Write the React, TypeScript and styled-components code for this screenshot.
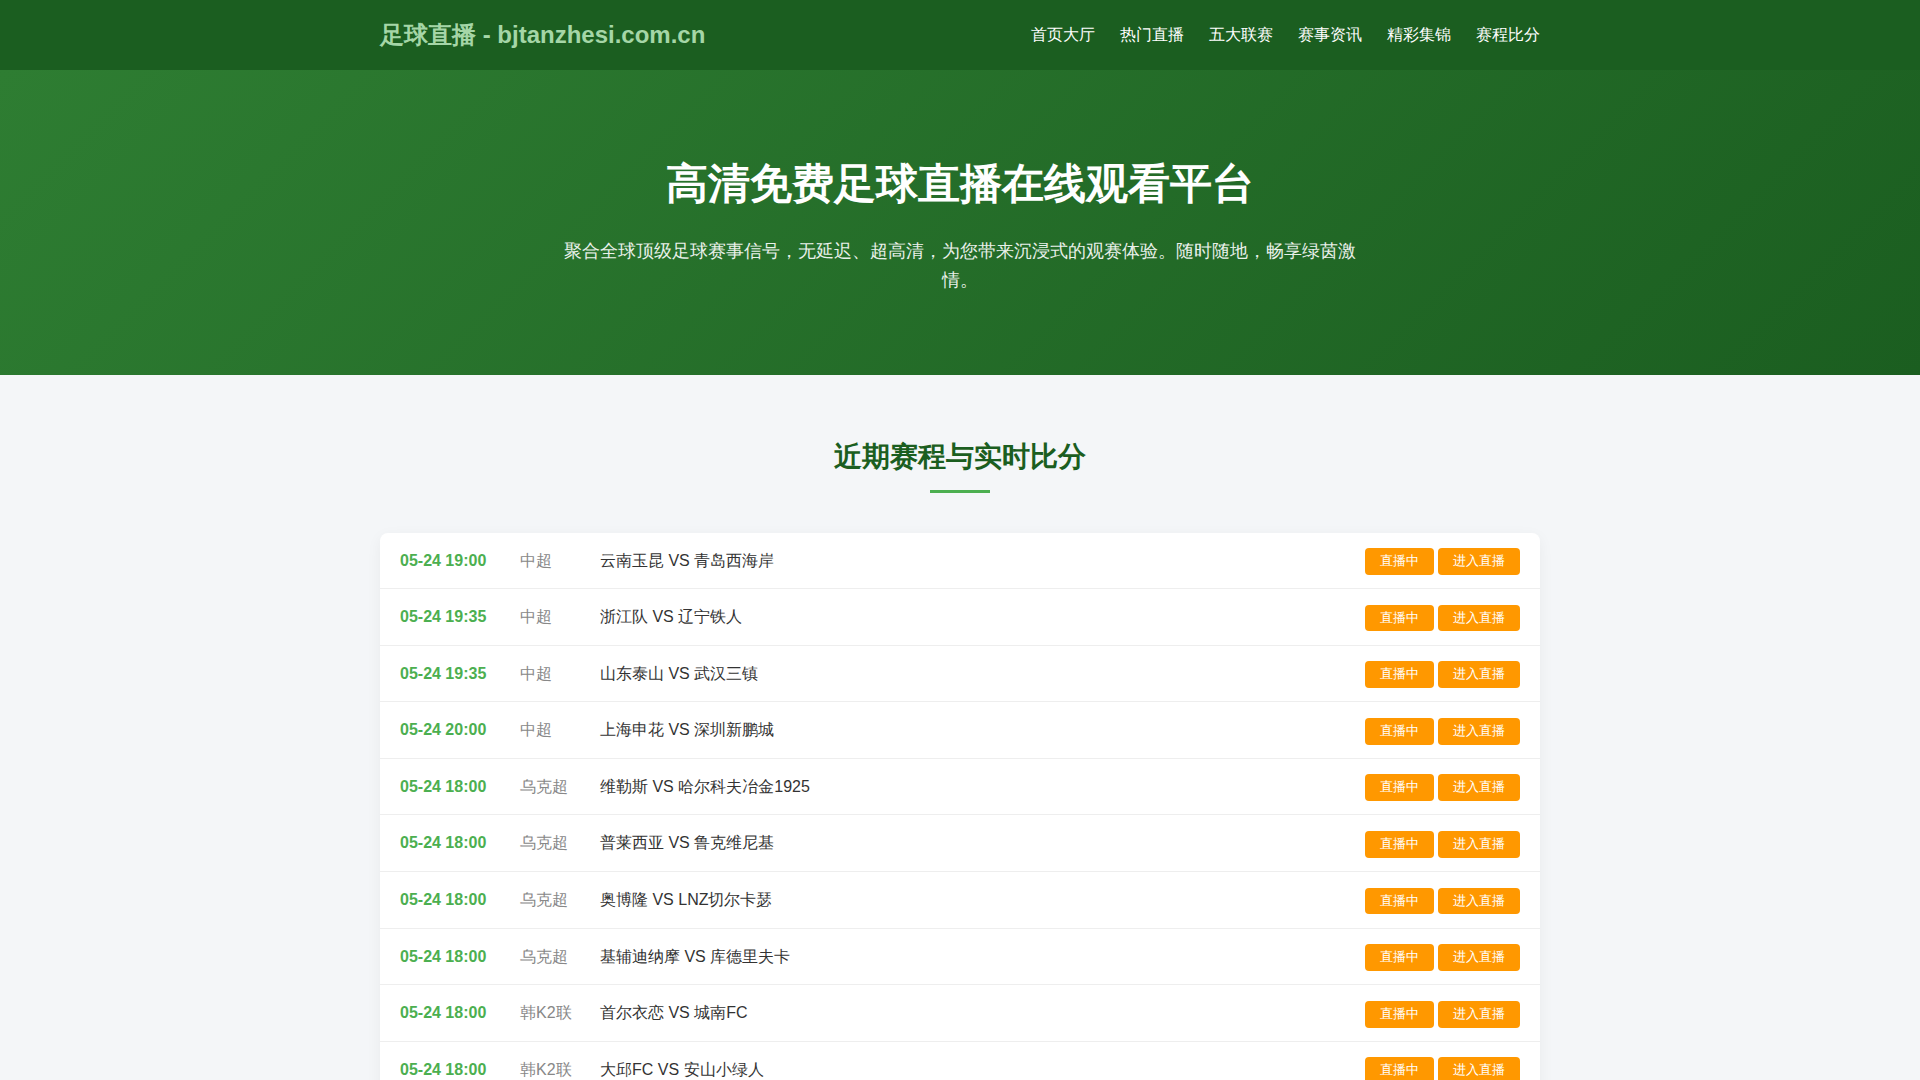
import styled, { createGlobalStyle } from 'styled-components';

const NAV_ITEMS = ['首页大厅', '热门直播', '五大联赛', '赛事资讯', '精彩集锦', '赛程比分'];

const MATCHES = [
  { time: '05-24 19:00', league: '中超', teams: '云南玉昆 VS 青岛西海岸' },
  { time: '05-24 19:35', league: '中超', teams: '浙江队 VS 辽宁铁人' },
  { time: '05-24 19:35', league: '中超', teams: '山东泰山 VS 武汉三镇' },
  { time: '05-24 20:00', league: '中超', teams: '上海申花 VS 深圳新鹏城' },
  { time: '05-24 18:00', league: '乌克超', teams: '维勒斯 VS 哈尔科夫冶金1925' },
  { time: '05-24 18:00', league: '乌克超', teams: '普莱西亚 VS 鲁克维尼基' },
  { time: '05-24 18:00', league: '乌克超', teams: '奥博隆 VS LNZ切尔卡瑟' },
  { time: '05-24 18:00', league: '乌克超', teams: '基辅迪纳摩 VS 库德里夫卡' },
  { time: '05-24 18:00', league: '韩K2联', teams: '首尔衣恋 VS 城南FC' },
  { time: '05-24 18:00', league: '韩K2联', teams: '大邱FC VS 安山小绿人' },
];

function App() {
  return (
    <>
      <GlobalStyle />
      <Header>
        <HeaderInner>
          <Logo>足球直播 - bjtanzhesi.com.cn</Logo>
          <Nav>
            {NAV_ITEMS.map((item) => (
              <NavLink key={item} href="#">
                {item}
              </NavLink>
            ))}
          </Nav>
        </HeaderInner>
      </Header>
      <Hero>
        <HeroTitle>高清免费足球直播在线观看平台</HeroTitle>
        <HeroText>聚合全球顶级足球赛事信号，无延迟、超高清，为您带来沉浸式的观赛体验。随时随地，畅享绿茵激情。</HeroText>
      </Hero>
      <Section>
        <SectionTitle>近期赛程与实时比分</SectionTitle>
        <MatchList>
          {MATCHES.map((match, index) => (
            <MatchRow key={index}>
              <MatchTime>{match.time}</MatchTime>
              <League>{match.league}</League>
              <Teams>{match.teams}</Teams>
              <Actions>
                <ActionButton href="#">直播中</ActionButton>
                <ActionButton href="#">进入直播</ActionButton>
              </Actions>
            </MatchRow>
          ))}
        </MatchList>
      </Section>
    </>
  );
}

export default App;

const GlobalStyle = createGlobalStyle`
  * {
    box-sizing: border-box;
  }

  body {
    margin: 0;
    background: #f4f6f8;
    color: #333;
    font-family: 'Liberation Sans', sans-serif;
    line-height: 1.6;
  }
`;

const Header = styled.header`
  background: #1b5e20;
  height: 70px;
`;

const HeaderInner = styled.div`
  max-width: 1200px;
  height: 100%;
  margin: 0 auto;
  padding: 0 20px;
  display: flex;
  align-items: center;
  justify-content: space-between;
`;

const Logo = styled.div`
  font-size: 24px;
  font-weight: 700;
  color: #a5d6a7;
`;

const Nav = styled.nav`
  display: flex;
  gap: 25px;
`;

const NavLink = styled.a`
  font-size: 16px;
  color: #fff;
  text-decoration: none;
`;

const Hero = styled.section`
  height: 305px;
  padding: 80px 20px 0;
  background: linear-gradient(135deg, #2e7d32, #1b5e20);
  color: #fff;
  text-align: center;
`;

const HeroTitle = styled.h1`
  margin: 0 0 20px;
  font-size: 42px;
  line-height: 1.6;
  font-weight: 700;
`;

const HeroText = styled.p`
  max-width: 800px;
  margin: 0 auto;
  font-size: 18px;
  opacity: 0.9;
`;

const Section = styled.section`
  max-width: 1200px;
  margin: 0 auto;
  padding: 60px 20px;
`;

const SectionTitle = styled.h2`
  position: relative;
  margin: 0 0 39.5px;
  padding-bottom: 15px;
  color: #1b5e20;
  font-size: 28px;
  line-height: 43px;
  font-weight: 700;
  text-align: center;

  &::after {
    content: '';
    position: absolute;
    left: 50%;
    bottom: 0;
    width: 60px;
    height: 3px;
    margin-left: -30px;
    background: #4caf50;
  }
`;

const MatchList = styled.div`
  background: #fff;
  border-radius: 8px;
  box-shadow: 0 4px 15px rgba(0, 0, 0, 0.05);
  overflow: hidden;
`;

const MatchRow = styled.div`
  display: flex;
  align-items: center;
  height: 56.6px;
  padding: 0 20px;
  border-bottom: 1px solid #eee;
`;

const MatchTime = styled.div`
  width: 120px;
  color: #4caf50;
  font-weight: 700;
`;

const League = styled.div`
  width: 80px;
  color: #888;
`;

const Teams = styled.div`
  flex: 1;
  color: #333;
`;

const Actions = styled.div`
  display: flex;
  gap: 4px;
  padding-top: 2.4px;
`;

const ActionButton = styled.a`
  padding: 3px 15px;
  border-radius: 4px;
  background: #ff9800;
  color: #fff;
  font-size: 13px;
  text-decoration: none;
`;
